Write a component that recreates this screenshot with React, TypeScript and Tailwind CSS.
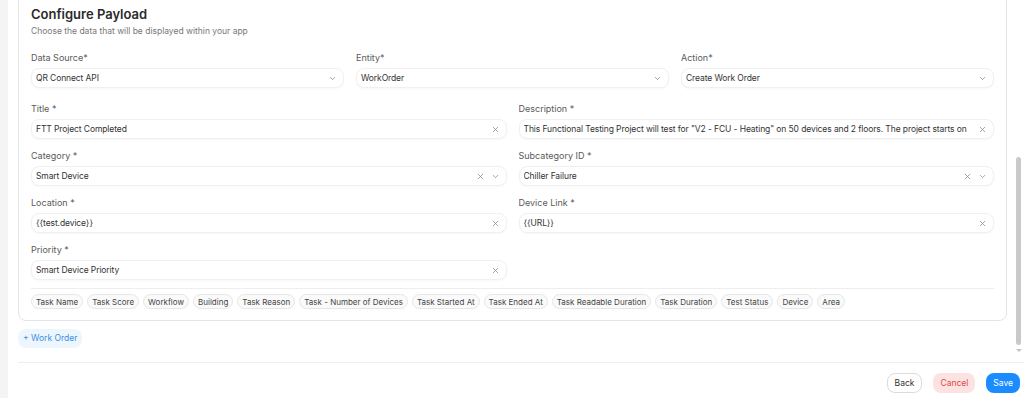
import React from 'react';
import { ChevronDown, X } from 'lucide-react';

const tags = [
  'Task Name',
  'Task Score',
  'Workflow',
  'Building',
  'Task Reason',
  'Task - Number of Devices',
  'Task Started At',
  'Task Ended At',
  'Task Readable Duration',
  'Task Duration',
  'Test Status',
  'Device',
  'Area',
];

const Field: React.FC<{ label: string; value: string; clear?: boolean; select?: boolean }> = ({
  label,
  value,
  clear,
  select,
}) => (
  <div className="flex flex-col min-w-0">
    <label className="text-[9px] leading-[12px] text-[#5a5a5a] mb-[4px]">{label}</label>
    <div className="h-[20px] flex items-center rounded-lg border border-[#f0f0f0] bg-white shadow-[0_1px_2px_rgba(0,0,0,0.03)] pl-[4px] pr-[6px] gap-[6px]">
      <span className="flex-1 whitespace-nowrap overflow-hidden text-[8.5px] tracking-[-0.1px] text-[#333]">{value}</span>
      {clear && <X size={9} strokeWidth={2} className="text-[#888] shrink-0" />}
      {select && <ChevronDown size={9} strokeWidth={2} className="text-[#888] shrink-0" />}
    </div>
  </div>
);

export default function App() {
  return (
    <div className="w-[1024px] h-[398px] flex bg-white overflow-hidden font-['Inter',sans-serif]">
      {/* left rail */}
      <div className="w-[8px] bg-[#f4f4f5] shrink-0" />

      <div className="flex-1 flex flex-col min-w-0">
        {/* scroll area */}
        <div className="h-[358px] flex overflow-hidden">
          <div className="flex-1 pl-[10px] pr-[6px] min-w-0">
            <div className="mt-[-10px] pt-[15px] pb-[11px] px-[12px] border border-[#e4e4e7] rounded-lg">
              <h2 className="text-[13px] leading-[17px] font-semibold text-[#2a2a2a]">Configure Payload</h2>
              <p className="text-[8.5px] leading-[12px] text-[#777] mt-[2px]">
                Choose the data that will be displayed within your app
              </p>

              <div className="grid grid-cols-3 gap-x-[12px] mt-[15px]">
                <Field label="Data Source*" value="QR Connect API" select />
                <Field label="Entity*" value="WorkOrder" select />
                <Field label="Action*" value="Create Work Order" select />
              </div>

              <div className="grid grid-cols-2 gap-x-[12px] gap-y-[11px] mt-[15px]">
                <Field label="Title *" value="FTT Project Completed" clear />
                <Field
                  label="Description *"
                  value={'This Functional Testing Project will test for "V2 - FCU - Heating" on 50 devices and 2 floors. The project starts on'}
                  clear
                />
                <Field label="Category *" value="Smart Device" clear select />
                <Field label="Subcategory ID *" value="Chiller Failure" clear select />
                <Field label="Location *" value="{{test.device}}" clear />
                <Field label="Device Link *" value="{{URL}}" clear />
                <Field label="Priority *" value="Smart Device Priority" clear />
              </div>

              <div className="border-t border-[#eeeeee] mt-[8px] pt-[5px] flex flex-wrap gap-[4px]">
                {tags.map((t) => (
                  <span
                    key={t}
                    className="h-[15px] px-[4px] flex items-center rounded-full border border-[#e6e6e6] bg-[#fafafa] text-[8px] text-[#444]"
                  >
                    {t}
                  </span>
                ))}
              </div>
            </div>

            <button className="mt-[8px] h-[19px] px-[5px] rounded-lg bg-[#eef6fd] text-[8.5px] text-[#3b8fe0]">
              + Work Order
            </button>
          </div>

          {/* scrollbar */}
          <div className="w-[11px] shrink-0 relative">
            <div className="absolute left-[3px] top-[157px] w-[5px] h-[188px] rounded-full bg-[#c9c9cc]" />
            <div className="absolute left-[3px] top-[349px] w-0 h-0 border-l-[3px] border-r-[3px] border-t-[3px] border-l-transparent border-r-transparent border-t-[#c4c4c4]" />
          </div>
        </div>

        {/* footer */}
        <div className="ml-[10px] mt-[4px] border-t border-[#efefef] pt-[10px] pr-[4px] flex justify-end gap-[11px]">
          <button className="h-[20px] px-[7px] rounded-lg border border-[#dcdcdc] bg-white text-[8.5px] text-[#333]">
            Back
          </button>
          <button className="h-[20px] px-[7px] rounded-lg bg-[#fde2e2] text-[8.5px] text-[#e04848]">
            Cancel
          </button>
          <button className="h-[20px] px-[7px] rounded-lg bg-[#1a8cff] text-[8.5px] text-white">
            Save
          </button>
        </div>
      </div>
    </div>
  );
}
